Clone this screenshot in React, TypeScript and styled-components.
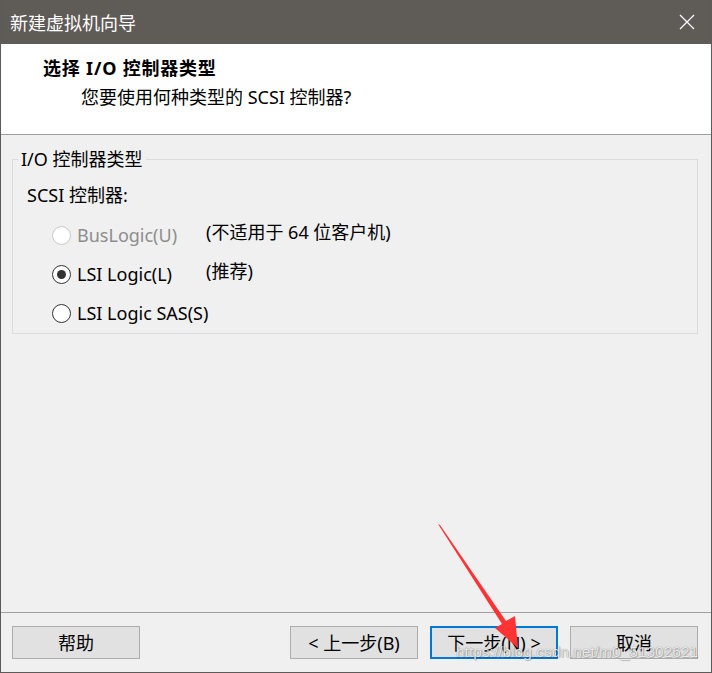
import React from "react";
import styled, { createGlobalStyle } from "styled-components";

const Global = createGlobalStyle`
  html, body { margin: 0; padding: 0; background: #f0f0f0; }
  * { box-sizing: border-box; }
  body { font-family: "Noto Sans", "Noto Sans CJK SC", sans-serif; }
`;

const FONT = `"Noto Sans", "Noto Sans CJK SC", sans-serif`;

const Window = styled.div`
  position: relative;
  width: 712px;
  height: 673px;
  display: flex;
  flex-direction: column;
  background: #f0f0f0;
  border-left: 1px solid #5e5a57;
  border-right: 1px solid #5e5a57;
  border-bottom: 1px solid #5e5a57;
  overflow: hidden;
  font-family: ${FONT};
  color: #000;
`;

const TitleBar = styled.div`
  height: 44px;
  flex: none;
  background: #5f5b57;
  display: flex;
  align-items: center;
  justify-content: space-between;
  padding-left: 10px;
  margin: 0 -1px;
`;

const TitleText = styled.span`
  color: #fff;
  font-size: 18px;
  font-family: "Noto Sans CJK SC", sans-serif;
  line-height: 1;
`;

const CloseBtn = styled.div`
  width: 50px;
  height: 44px;
  display: flex;
  align-items: center;
  justify-content: center;
`;

const Header = styled.div`
  height: 91px;
  flex: none;
  background: #fff;
  border-bottom: 1px solid #a0a0a0;
  padding: 12px 0 0 42px;
  display: flex;
  flex-direction: column;
`;

const Heading = styled.div`
  font-size: 18px;
  font-weight: 700;
  line-height: 24px;
  height: 24px;
  letter-spacing: 0.8px;
`;

const SubHeading = styled.div`
  font-size: 18px;
  line-height: 24px;
  margin-top: 5px;
  padding-left: 38px;
`;

const Body = styled.div`
  flex: 1;
  padding: 13px 13px 0 11px;
`;

const Group = styled.fieldset`
  margin: 0;
  border: 1px solid #dcdcdc;
  padding: 0;
  height: 186px;
  display: flex;
  flex-direction: column;
`;

const Legend = styled.legend`
  font-size: 18px;
  line-height: 22px;
  padding: 0 3px;
  margin-left: 5px;
`;

const GroupLabel = styled.div`
  font-size: 18px;
  line-height: 24px;
  padding: 13px 0 0 14px;
`;

const Options = styled.div`
  display: grid;
  grid-template-columns: 154px auto;
  row-gap: 15px;
  padding: 16px 0 0 39px;
  align-items: start;
`;

const RadioRow = styled.label<{ $disabled?: boolean }>`
  display: flex;
  align-items: center;
  gap: 6px;
  font-size: 18px;
  line-height: 24px;
  white-space: nowrap;
  color: ${(p) => (p.$disabled ? "#8d8d8d" : "#000")};
`;

const RadioCircle = styled.span<{ $disabled?: boolean; $checked?: boolean }>`
  width: 19px;
  height: 19px;
  border-radius: 50%;
  border: 1px solid ${(p) => (p.$disabled ? "#c8c8c8" : "#333")};
  background: #fff;
  display: flex;
  align-items: center;
  justify-content: center;
  flex: none;
  &::after {
    content: "";
    width: 9px;
    height: 9px;
    border-radius: 50%;
    background: #333;
    display: ${(p) => (p.$checked ? "block" : "none")};
  }
`;

const Note = styled.div`
  font-size: 18px;
  line-height: 24px;
  margin-top: -3px;
  white-space: nowrap;
`;

const Footer = styled.div`
  height: 60px;
  flex: none;
  border-top: 1px solid #a0a0a0;
  display: flex;
  align-items: flex-start;
  padding: 13px 13px 0 11px;
`;

const Spacer = styled.div`
  flex: 1;
`;

const Button = styled.button<{ $focused?: boolean }>`
  width: 128px;
  height: 33px;
  background: #e1e1e1;
  border: ${(p) => (p.$focused ? "2px solid #0078d7" : "1px solid #adadad")};
  font-family: ${FONT};
  font-size: 18px;
  color: #000;
  padding: 0;
  margin-left: 12px;
  display: flex;
  align-items: center;
  justify-content: center;
  line-height: 1;
  &:first-child { margin-left: 0; }
`;

const Watermark = styled.div`
  position: absolute;
  left: 455px;
  top: 643px;
  font-family: "Liberation Sans", Arial, sans-serif;
  font-size: 15.5px;
  color: rgba(255, 255, 255, 0.85);
  text-shadow: 0 0 1px rgba(0, 0, 0, 0.5), 1px 1px 1px rgba(0, 0, 0, 0.2);
  pointer-events: none;
  white-space: nowrap;
`;

const ArrowOverlay = styled.svg`
  position: absolute;
  left: 0;
  top: 0;
  pointer-events: none;
`;

const GapMask = styled.div`
  position: absolute;
  left: 697px;
  top: 298px;
  width: 3px;
  height: 22px;
  background: #f0f0f0;
`;

export default function App() {
  return (
    <>
      <Global />
      <Window>
        <TitleBar>
          <TitleText>新建虚拟机向导</TitleText>
          <CloseBtn>
            <svg width="16" height="16" viewBox="0 0 16 16">
              <path d="M1 1 L15 15 M15 1 L1 15" stroke="#fff" strokeWidth="1.3" fill="none" />
            </svg>
          </CloseBtn>
        </TitleBar>
        <Header>
          <Heading>选择 I/O 控制器类型</Heading>
          <SubHeading>您要使用何种类型的 SCSI 控制器?</SubHeading>
        </Header>
        <Body>
          <Group>
            <Legend>I/O 控制器类型</Legend>
            <GroupLabel>SCSI 控制器:</GroupLabel>
            <Options>
              <RadioRow $disabled>
                <RadioCircle $disabled />
                BusLogic(U)
              </RadioRow>
              <Note>(不适用于 64 位客户机)</Note>
              <RadioRow>
                <RadioCircle $checked />
                LSI Logic(L)
              </RadioRow>
              <Note>(推荐)</Note>
              <RadioRow>
                <RadioCircle />
                LSI Logic SAS(S)
              </RadioRow>
              <div />
            </Options>
          </Group>
        </Body>
        <Footer>
          <Button>帮助</Button>
          <Spacer />
          <Button>&lt; 上一步(B)</Button>
          <Button $focused>下一步(N) &gt;</Button>
          <Button>取消</Button>
        </Footer>
        <GapMask />
        <Watermark>https://blog.csdn.net/m0_51302621</Watermark>
        <ArrowOverlay width="712" height="673" viewBox="0 0 712 673">
          <polygon points="437,524 439,525 505,621 514,616 517,648 494,628 501,624" fill="#ff3333" />
        </ArrowOverlay>
      </Window>
    </>
  );
}
